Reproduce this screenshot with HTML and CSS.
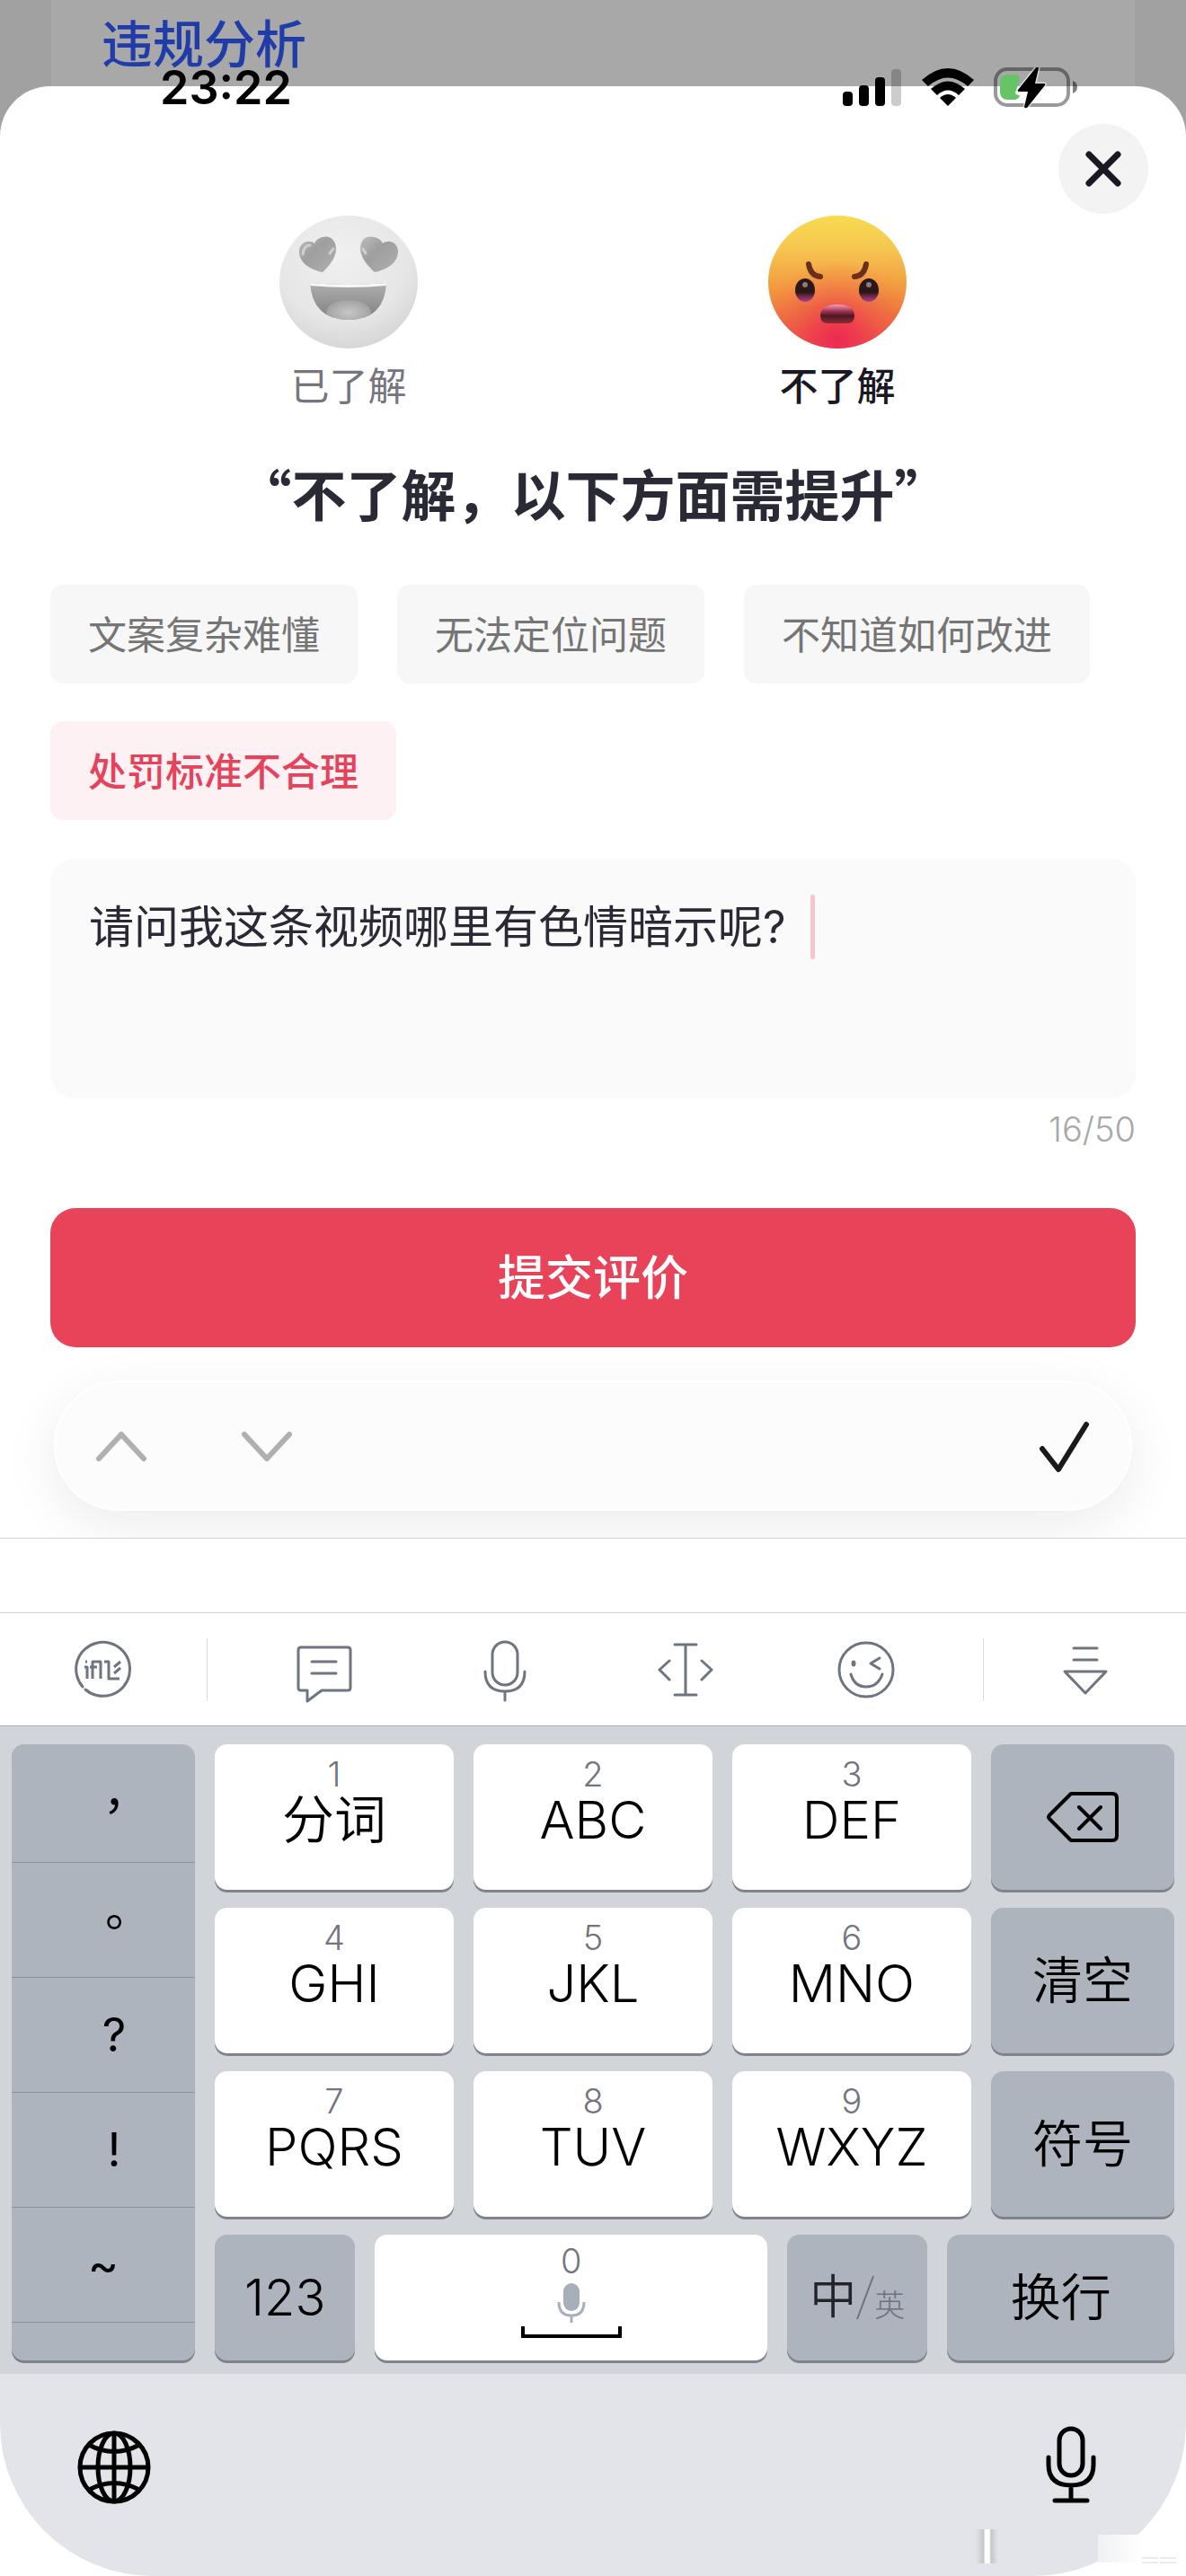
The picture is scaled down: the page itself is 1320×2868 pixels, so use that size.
FILE: index.html
```
<!DOCTYPE html>
<html lang="zh-CN">
<head>
    <meta charset="UTF-8">
    <meta name="viewport" content="width=device-width, initial-scale=1.0">
    <title>违规分析</title>
    <link rel="stylesheet" href="styles.css">
</head>
<body>
    <div class="backdrop">
        <h1>违规分析</h1>
    </div>

    <div class="status-bar">
        <span class="time">23:22</span>
        <div class="status-icons">
            <svg width="66" height="44" viewBox="0 0 66 44">
                <rect x="0" y="26" width="11" height="16" rx="4"/>
                <rect x="18" y="19" width="11" height="23" rx="4"/>
                <rect x="36" y="10" width="11" height="32" rx="4"/>
                <rect x="54" y="1" width="11" height="41" rx="4" opacity=".2"/>
            </svg>
            <svg width="58" height="44" viewBox="0 0 58 44">
                <path d="M0 13Q29-13 58 13L51 20Q29 1 7 20Z"/>
                <path d="M10 23Q29 6 48 23L41 30Q29 19 17 30Z"/>
                <path d="M20 33Q29 25 38 33L29 42Z"/>
            </svg>
            <svg width="94" height="46" viewBox="0 0 94 46">
                <rect x="2" y="2" width="81" height="40" rx="13" fill="none" stroke="#000" stroke-opacity=".4" stroke-width="4"/>
                <path d="M88 15q5 2 5 7t-5 7z" opacity=".5"/>
                <path d="M16 8h8q5 0 5 6l-5 14q0 3 5 3-1 5-7 5h-6q-9 0-9-9V17q0-9 9-9z" fill="#65c466"/>
                <path d="M48-1L27 25q-1 2 1 2h10l-4 17q1 2 3 1l20-25q1-2-1-2H46l4-17q0-2-2-2z" class="bolt"/>
            </svg>
        </div>
    </div>

    <main class="sheet">
        <button class="close" aria-label="关闭">
            <svg width="44" height="44" viewBox="0 0 44 44" fill="none" stroke="#191824" stroke-width="7" stroke-linecap="round">
                <path d="M6 6L38 38M38 6L6 38"/>
            </svg>
        </button>

        <div class="faces">
            <button class="face">
                <svg width="154" height="150" viewBox="0 0 154 150">
                    <defs>
                        <radialGradient id="grayFace" cx=".45" cy=".3" r=".75">
                            <stop offset="0" stop-color="#f0f0f0"/>
                            <stop offset=".65" stop-color="#e6e6e6"/>
                            <stop offset="1" stop-color="#d3d3d3"/>
                        </radialGradient>
                        <linearGradient id="grayHeart" x1="0" y1="0" x2="1" y2="1">
                            <stop offset="0" stop-color="#bdbdbd"/>
                            <stop offset=".4" stop-color="#9e9e9e"/>
                            <stop offset="1" stop-color="#b0b0b0"/>
                        </linearGradient>
                        <linearGradient id="grayMouth" x1="0" y1="0" x2="0" y2="1">
                            <stop offset="0" stop-color="#b4b4b4"/>
                            <stop offset="1" stop-color="#7c7c7c"/>
                        </linearGradient>
                        <radialGradient id="grayTongue">
                            <stop offset="0" stop-color="#c8c8c8"/>
                            <stop offset="1" stop-color="#a2a2a2"/>
                        </radialGradient>
                        <clipPath id="mouthClip"><path d="M34 75Q77 79 119 75Q117 116 77 116Q37 116 34 75Z"/></clipPath>
                    </defs>
                    <ellipse cx="77" cy="74" rx="77" ry="74" fill="url(#grayFace)"/>
                    <path d="M48 63C33 60 22 52 22 40C22 29 34 26 39 31C43 22 58 20 62 31C66 43 57 55 48 63Z" fill="url(#grayHeart)"/>
                    <path d="M106 63C121 60 132 52 132 40C132 29 120 26 115 31C111 22 94 20 91 31C87 43 97 55 106 63Z" fill="url(#grayHeart)"/>
                    <path d="M26 43q1-10 8-10M56 42l4-5M93 37l3 5" fill="none" stroke="#cfcfcf" stroke-width="3" stroke-linecap="round"/>
                    <g clip-path="url(#mouthClip)">
                        <rect x="30" y="70" width="94" height="50" fill="url(#grayMouth)"/>
                        <ellipse cx="77" cy="108" rx="25" ry="14" fill="url(#grayTongue)"/>
                        <path d="M34 75Q77 79 120 75" fill="none" stroke="#f8f8f8" stroke-width="6"/>
                    </g>
                </svg>
                <span>已了解</span>
            </button>
            <button class="face active">
                <svg width="154" height="150" viewBox="0 0 154 150">
                    <defs>
                        <linearGradient id="hotFace" x1="0" y1="0" x2="0" y2="1">
                            <stop offset="0" stop-color="#f8dc50"/>
                            <stop offset=".25" stop-color="#f6c651"/>
                            <stop offset=".55" stop-color="#f29a3f"/>
                            <stop offset=".8" stop-color="#ee6d3c"/>
                            <stop offset="1" stop-color="#ea4450"/>
                        </linearGradient>
                        <radialGradient id="hotChin" cx=".5" cy=".93" r=".6">
                            <stop offset="0" stop-color="#ee2853"/>
                            <stop offset=".3" stop-color="#ee3b4e" stop-opacity=".8"/>
                            <stop offset="1" stop-color="#f07848" stop-opacity="0"/>
                        </radialGradient>
                        <linearGradient id="hotEye" x1="0" y1="0" x2="0" y2="1">
                            <stop offset=".6" stop-color="#2b1716"/>
                            <stop offset=".8" stop-color="#7c2c58"/>
                            <stop offset="1" stop-color="#a94487"/>
                        </linearGradient>
                        <linearGradient id="hotMouth" x1="0" y1="0" x2="0" y2="1">
                            <stop offset="0" stop-color="#f5a0b6"/>
                            <stop offset=".35" stop-color="#a23556"/>
                            <stop offset=".6" stop-color="#4d1820"/>
                            <stop offset="1" stop-color="#8c2c3a"/>
                        </linearGradient>
                    </defs>
                    <ellipse cx="77" cy="74" rx="77" ry="74" fill="url(#hotFace)"/>
                    <ellipse cx="77" cy="74" rx="77" ry="74" fill="url(#hotChin)"/>
                    <path d="M45 54q2 13 13 14M109 54q-2 13-13 14" fill="none" stroke="#6b2f1e" stroke-width="6" stroke-linecap="round"/>
                    <ellipse cx="41" cy="83" rx="11" ry="13" fill="url(#hotEye)"/>
                    <ellipse cx="112" cy="83" rx="11" ry="13" fill="url(#hotEye)"/>
                    <circle cx="41" cy="77" r="3" fill="#8d7c7b"/>
                    <circle cx="112" cy="77" r="3" fill="#8d7c7b"/>
                    <path d="M58 111q1-12 19-12t19 12q0 9-8 9H66q-8 0-8-9z" fill="url(#hotMouth)"/>
                </svg>
                <span>不了解</span>
            </button>
        </div>

        <h2>“不了解，以下方面需提升”</h2>

        <div class="chips">
            <button class="chip">文案复杂难懂</button>
            <button class="chip">无法定位问题</button>
            <button class="chip">不知道如何改进</button>
            <button class="chip selected">处罚标准不合理</button>
        </div>

        <div class="comment">
            <textarea aria-label="评价内容" maxlength="50">请问我这条视频哪里有色情暗示呢?</textarea>
            <i class="caret"></i>
        </div>
        <p class="count">16/50</p>

        <button class="submit">提交评价</button>

        <div class="form-nav">
            <button aria-label="上一项">
                <svg width="60" height="36" viewBox="0 0 60 36" fill="none" stroke="#b0b0b0" stroke-width="6" stroke-linecap="round" stroke-linejoin="round">
                    <path d="M5 32L30 5L55 32"/>
                </svg>
            </button>
            <button aria-label="下一项">
                <svg width="60" height="36" viewBox="0 0 60 36" fill="none" stroke="#b0b0b0" stroke-width="6" stroke-linecap="round" stroke-linejoin="round">
                    <path d="M5 5L30 32L55 5"/>
                </svg>
            </button>
            <button class="done" aria-label="完成">
                <svg width="60" height="60" viewBox="0 0 60 60" fill="none" stroke="#1a1a1a" stroke-width="6" stroke-linecap="round" stroke-linejoin="round">
                    <path d="M5 33L23 56L54 6"/>
                </svg>
            </button>
        </div>
    </main>

    <section class="keyboard">
        <div class="candidates"></div>

        <div class="tools">
            <button class="tool-side" aria-label="讯飞输入法">
                <svg width="68" height="68" viewBox="0 0 68 68">
                    <path d="M11 53A30 30 0 1 1 14 56"/>
                    <path d="M14 25h2M13 31h3v13M22 44V25h9v19M19 31h8M35 25h5v19h12M46 31l7-6M46 38l7-6" stroke-width="3" stroke-linecap="butt"/>
                </svg>
            </button>
            <div class="tool-list">
                <button aria-label="快捷短语">
                    <svg width="68" height="68" viewBox="0 0 68 68">
                        <path d="M8 9h52q3 0 3 3v42q0 3-3 3H31L15 69V57H8q-3 0-3-3V12q0-3 3-3zM20 25h27M20 38h27"/>
                    </svg>
                </button>
                <button aria-label="语音">
                    <svg width="68" height="68" viewBox="0 0 68 68">
                        <rect x="20" y="3" width="28" height="48" rx="14"/>
                        <path d="M12 36q0 22 22 22t22-22M34 58v10"/>
                    </svg>
                </button>
                <button aria-label="移动光标">
                    <svg width="68" height="68" viewBox="0 0 68 68">
                        <path d="M22 6h24M34 6v56M22 62h24M16 24L5 34L16 45M52 24L63 34L52 45"/>
                    </svg>
                </button>
                <button aria-label="表情">
                    <svg width="68" height="68" viewBox="0 0 68 68">
                        <circle cx="34" cy="34" r="30"/>
                        <path d="M17 39q4 14 17 14t18-14M49 21L39 27L49 33"/>
                        <ellipse cx="20" cy="27" rx="1" ry="2"/>
                    </svg>
                </button>
            </div>
            <button class="tool-side hide" aria-label="收起键盘">
                <svg width="68" height="68" viewBox="0 0 68 68">
                    <path d="M21 10h26M21 23h26M11 36h46L34 60Z"/>
                </svg>
            </button>
        </div>

        <div class="keys">
            <div class="marks" lang="zh-TW">
                <button>，</button>
                <button>。</button>
                <button>?</button>
                <button>!</button>
                <button class="tilde">~</button>
            </div>
            <button class="key"><small>1</small><span>分词</span></button>
            <button class="key"><small>2</small><span>ABC</span></button>
            <button class="key"><small>3</small><span>DEF</span></button>
            <button class="key dark" aria-label="删除">
                <svg width="82" height="58" viewBox="0 0 82 58" fill="none" stroke="#000" stroke-width="4" stroke-linecap="round" stroke-linejoin="round">
                    <path d="M28 3h46q5 0 5 5v42q0 5-5 5H28L4 31q-2-2 0-4zM37 18l24 24M61 18L37 42"/>
                </svg>
            </button>
            <button class="key"><small>4</small><span>GHI</span></button>
            <button class="key"><small>5</small><span>JKL</span></button>
            <button class="key"><small>6</small><span>MNO</span></button>
            <button class="key dark">清空</button>
            <button class="key"><small>7</small><span>PQRS</span></button>
            <button class="key"><small>8</small><span>TUV</span></button>
            <button class="key"><small>9</small><span>WXYZ</span></button>
            <button class="key dark">符号</button>
            <div class="last-row">
                <button class="key dark">123</button>
                <button class="key space" aria-label="空格">
                    <small>0</small>
                    <svg width="112" height="66" viewBox="0 0 112 66">
                        <rect x="47" y="5" width="18" height="31" rx="9" fill="#a7afba"/>
                        <path d="M42 26q0 15 14 15t14-15M56 41v8" fill="none" stroke="#a7afba" stroke-width="3"/>
                        <path d="M2 53v11h108V53" fill="none" stroke="#000" stroke-width="4"/>
                    </svg>
                </button>
                <button class="key dark lang"><span>中</span><svg width="20" height="50" viewBox="0 0 20 50" fill="none" stroke="#6d727e" stroke-width="2"><path d="M19 1L1 49"/></svg><small>英</small></button>
                <button class="key dark">换行</button>
            </div>
        </div>

        <div class="dock">
            <div class="dock-row">
                <button aria-label="切换输入法">
                    <svg width="84" height="84" viewBox="0 0 84 84" fill="none" stroke="#000" stroke-width="5">
                        <circle cx="42" cy="42" r="38"/>
                        <ellipse cx="42" cy="42" rx="18" ry="38"/>
                        <path d="M4 42h76M42 4v76M14 17q28 15 56 0M14 67q28-15 56 0"/>
                    </svg>
                </button>
                <button aria-label="听写">
                    <svg width="60" height="92" viewBox="0 0 60 92" fill="none" stroke="#000" stroke-width="5" stroke-linecap="round">
                        <rect x="17" y="3" width="26" height="52" rx="13"/>
                        <path d="M5 35v8q0 23 25 23t25-23v-8M30 66v16M12 83h36"/>
                    </svg>
                </button>
            </div>
            <svg class="smudge" width="230" height="44" viewBox="0 0 230 44">
                <defs>
                    <linearGradient id="streak">
                        <stop offset="0" stop-color="#c4c6ca" stop-opacity="0"/>
                        <stop offset=".35" stop-color="#c4c6ca"/>
                        <stop offset=".42" stop-color="#fff"/>
                        <stop offset=".6" stop-color="#fff"/>
                        <stop offset=".68" stop-color="#c4c6ca"/>
                        <stop offset="1" stop-color="#c4c6ca" stop-opacity="0"/>
                    </linearGradient>
                    <linearGradient id="patch">
                        <stop offset="0" stop-color="#f0f1f3"/>
                        <stop offset="1" stop-color="#fff"/>
                    </linearGradient>
                </defs>
                <rect x="5" y="4" width="25" height="38" fill="url(#streak)"/>
                <rect x="141" y="10" width="48" height="31" fill="url(#patch)"/>
                <path d="M190 36h18M210 36h18M190 41h18M210 41h18" stroke="#d6d6d6" stroke-width="1"/>
            </svg>
        </div>
    </section>
</body>
</html>
```
FILE: styles.css
```
* { margin: 0; padding: 0; box-sizing: border-box; }
body { font-family: Inter, "Noto Sans CJK SC", sans-serif; background: #fff; color: #000; min-height: 100vh; position: relative; display: flex; flex-direction: column; }
button { background: none; border: none; font-family: inherit; color: inherit; cursor: pointer; }
svg { display: block; flex: none; }

/* dimmed page behind the sheet */
.backdrop { height: 152px; padding: 8px 56px 0; background: #a8a8a8; border: solid #a1a1a1; border-width: 0 57px; }
.backdrop h1 { font-size: 57px; line-height: 84px; font-weight: 500; color: #203ca8; }

.status-bar { position: absolute; z-index: 2; top: 66px; left: 0; right: 0; padding: 0 120px 0 178px; display: flex; justify-content: space-between; align-items: center; }
.time { font-size: 52px; line-height: 64px; font-weight: 600; }
.status-icons { display: flex; align-items: center; gap: 22px; }
.bolt { stroke: #fff; stroke-width: 3; paint-order: stroke; stroke-opacity: .6; }

.sheet { position: relative; margin-top: -56px; padding: 144px 56px 30px; background: #fff; border-radius: 56px 56px 0 0; overflow: hidden; }
.close { position: absolute; top: 42px; right: 42px; width: 100px; height: 100px; border-radius: 50%; background: #f3f3f3; display: flex; align-items: center; justify-content: center; }

.faces { display: grid; grid-template-columns: 1fr 1fr; padding: 0 60px; }
.face { display: flex; flex-direction: column; align-items: center; gap: 10px; font-size: 43px; line-height: 60px; color: #75757d; }
.face.active { color: #191824; font-weight: 500; }

h2 { margin-top: 49px; text-align: center; font-family: "Noto Sans CJK SC", sans-serif; font-size: 61px; line-height: 80px; font-weight: 600; color: #2a2a37; }

.chips { margin-top: 62px; display: flex; flex-wrap: wrap; gap: 42px 44px; }
.chip { height: 110px; padding: 0 42px 5px; border-radius: 14px; background: #f7f7f7; font-size: 43px; color: #757575; }
.chip.selected { background: #fdf1f3; color: #e5435c; font-weight: 500; }

.comment { position: relative; margin-top: 43px; }
.comment textarea { display: block; width: 100%; height: 267px; padding: 38px 43px; border: none; outline: none; resize: none; border-radius: 27px; background: #fafafa; font-family: inherit; font-size: 50px; line-height: 76px; color: #2a2a37; }
.caret { position: absolute; top: 40px; left: 846px; width: 5px; height: 72px; border-radius: 3px; background: #f5c5ce; }
.count { margin-top: 12px; text-align: right; font-size: 38px; line-height: 44px; font-weight: 300; color: #a8a8a8; }

.submit { display: block; width: 100%; height: 155px; margin-top: 66px; padding-bottom: 8px; border-radius: 28px; background: #e94359; color: #fff; font-size: 53px; font-weight: 500; }

.form-nav { margin: 37px 4px 0; height: 145px; padding: 0 43px; display: flex; align-items: center; gap: 102px; border-radius: 73px; border: 2px solid #fff; background: #fcfcfc; box-shadow: 0 16px 60px rgba(0, 0, 0, 0.08); }
.form-nav .done { margin-left: auto; }

.keyboard { flex: 1; display: flex; flex-direction: column; border-top: 1px solid #d0d2d4; background: #fff; }
.candidates { height: 82px; }
.tools { height: 127px; display: flex; align-items: center; border-top: 1px solid #d0d2d4; border-bottom: 1px solid #a9afb5; }
.tools svg { fill: none; stroke: #6e7480; stroke-width: 3; stroke-linecap: round; stroke-linejoin: round; overflow: visible; }
.tools button { display: flex; justify-content: center; }
.tool-side { width: 230px; }
.tool-side.hide { width: 225px; }
.tool-list { flex: 1; height: 70px; padding: 0 29px; display: flex; align-items: center; border: solid #d8dadc; border-width: 0 1px; }
.tool-list button { flex: 1; }

.keys { padding: 20px 13px 15px; display: grid; grid-template-columns: 204fr 266fr 266fr 266fr 204fr; grid-template-rows: 162px 162px 162px 140px; gap: 20px 22px; background: #d1d4d9; }
.key { display: flex; flex-direction: column; align-items: center; border-radius: 14px; background: #fff; box-shadow: 0 3px #80838b; padding-top: 13px; font-size: 58px; line-height: 62px; font-weight: 350; }
.key small { font-size: 38px; line-height: 40px; font-weight: 300; color: #73747d; }
.key.dark { padding: 0; justify-content: center; background: #aeb4be; font-size: 56px; }
.marks { grid-row: 1 / 5; display: flex; flex-direction: column; border-radius: 14px; background: #aeb4be; box-shadow: 0 3px #80838b; }
.marks button { height: 128px; padding-left: 24px; border-bottom: 1px solid #8c929c; font-family: Inter, "Noto Sans CJK TC", sans-serif; font-size: 52px; }
.marks button:first-child { height: 132px; }
.marks .tilde { padding-left: 0; }
.last-row { grid-column: 2 / 6; display: grid; grid-template-columns: 156fr 436fr 156fr 252fr; gap: 22px; }
.key.space { padding-top: 9px; }
.key.lang { flex-direction: row; font-size: 52px; color: #22242a; }
.key.lang small { font-size: 34px; align-self: flex-end; margin-bottom: 41px; color: #6d727e; }

.dock { position: relative; flex: 1; min-height: 220px; padding: 58px 98px 0 85px; background: #e2e4e9; border-radius: 0 0 170px 170px; }
.dock-row { display: flex; justify-content: space-between; align-items: center; }
.smudge { position: absolute; right: 9px; bottom: 12px; }
```
